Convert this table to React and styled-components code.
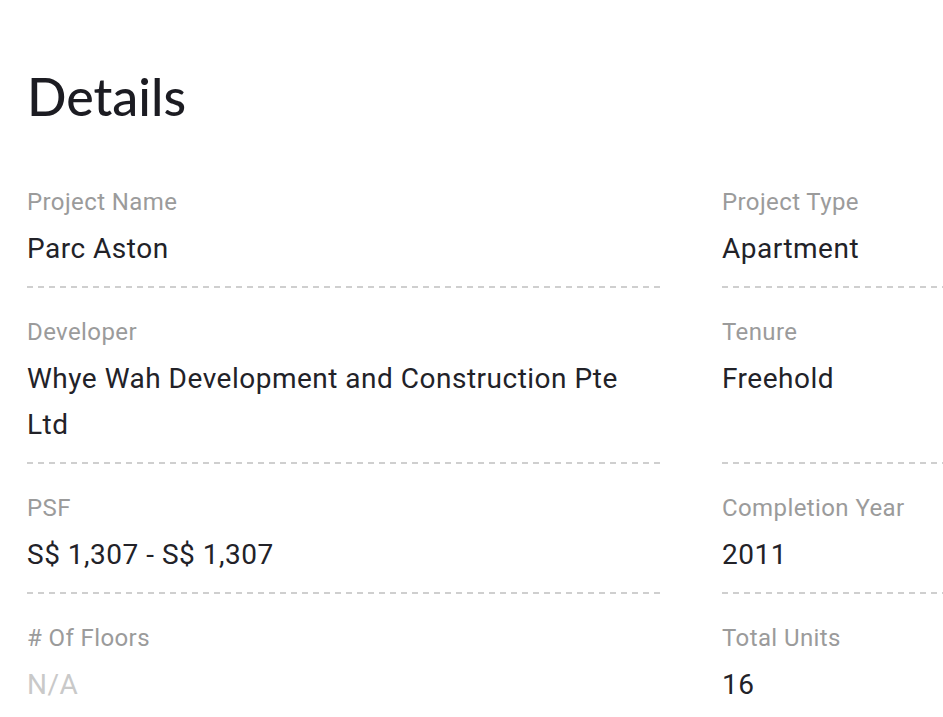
import React from "react";
import styled, { createGlobalStyle } from "styled-components";

const GlobalStyle = createGlobalStyle`
  html, body {
    margin: 0;
    padding: 0;
    background: #ffffff;
    overflow: hidden;
  }
`;

// fields shown in the details grid, left column then right column per row
const fields = [
  { label: "Project Name", value: "Parc Aston" },
  { label: "Project Type", value: "Apartment" },
  { label: "Developer", value: "Whye Wah Development and Construction Pte Ltd" },
  { label: "Tenure", value: "Freehold" },
  { label: "PSF", value: "S$ 1,307 - S$ 1,307" },
  { label: "Completion Year", value: "2011" },
  { label: "# Of Floors", value: null },
  { label: "Total Units", value: "16" },
];

const App = () => {
  return (
    <StyledPage>
      <GlobalStyle />
      <StyledTitle>Details</StyledTitle>
      <StyledGrid>
        {fields.map((field) => (
          <StyledField key={field.label}>
            <StyledLabel>{field.label}</StyledLabel>
            <StyledValue $empty={!field.value}>{field.value || "N/A"}</StyledValue>
          </StyledField>
        ))}
      </StyledGrid>
    </StyledPage>
  );
};

const StyledPage = styled.section`
  width: 1400px;
  padding: 68px 0 0 27px;
  box-sizing: border-box;
`;

const StyledTitle = styled.h1`
  margin: 0 0 62px;
  font-family: Lato, "Noto Sans", sans-serif;
  font-weight: 500;
  font-size: 52px;
  line-height: 56px;
  color: #1c1c22;
`;

const StyledGrid = styled.div`
  display: grid;
  grid-template-columns: 633px 633px;
  column-gap: 62px;
  row-gap: 28px;
`;

const StyledField = styled.div`
  display: flex;
  flex-direction: column;
  gap: 8px;
  padding-bottom: 16px;
  background-image: linear-gradient(to right, #cfcfcf 0 6px, transparent 6px 11px);
  background-size: 11px 2px;
  background-repeat: repeat-x;
  background-position: left bottom;
`;

const StyledLabel = styled.div`
  font-family: Roboto, "Liberation Sans", sans-serif;
  font-size: 24px;
  line-height: 32px;
  letter-spacing: 0.4px;
  color: #9b9b9b;
`;

const StyledValue = styled.div`
  font-family: Roboto, "Liberation Sans", sans-serif;
  font-size: 28px;
  line-height: 46px;
  letter-spacing: 0.5px;
  color: ${(props) => (props.$empty ? "#c9c9c9" : "#222228")};
`;

export default App;
